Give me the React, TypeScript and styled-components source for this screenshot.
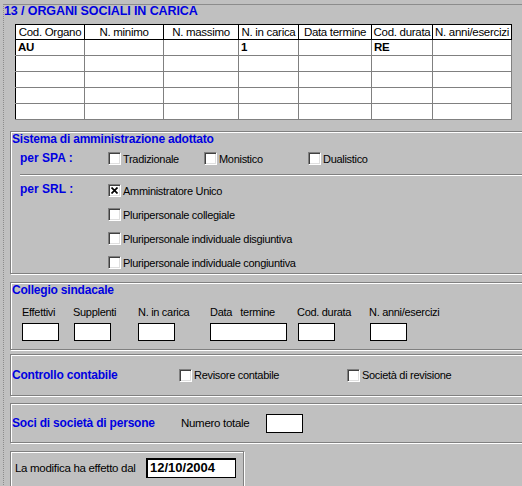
import React from 'react';
import styled, { createGlobalStyle } from 'styled-components';

const GlobalStyle = createGlobalStyle`
  html, body {
    margin: 0;
    padding: 0;
    background: #c0c0c0;
  }
  body {
    font-family: 'Liberation Sans', Arial, sans-serif;
    font-size: 11px;
    color: #000;
  }
`;

const BLUE = '#0000e0';

const Screen = styled.div`
  width: 522px;
  height: 486px;
  overflow: hidden;
  background: #c0c0c0;
  padding-left: 3px;
  box-sizing: border-box;
`;

const Frame = styled.div`
  margin-top: 4px;
  border-top: 1px solid #8c8c8c;
  border-left: 1px dotted #8c8c8c;
  height: 520px;
`;

const FrameTitle = styled.div`
  display: inline-block;
  margin-top: -1px;
  padding-right: 2px;
  background: #c0c0c0;
  color: ${BLUE};
  font-weight: bold;
  font-size: 12.5px;
  line-height: 13px;
  letter-spacing: -0.1px;
`;

const Grid = styled.table`
  margin: 6px 0 0 11px;
  border-collapse: collapse;
  table-layout: fixed;
  background: #fff;
  border: 1px solid #000;
  letter-spacing: -0.3px;
`;

const HeadCell = styled.th<{ $w: number }>`
  width: ${(p) => p.$w}px;
  height: 14px;
  padding: 0;
  font-weight: normal;
  font-size: 11.5px;
  text-align: center;
  white-space: nowrap;
  overflow: hidden;
  border-right: 1px solid #000;
  border-bottom: 1px solid #000;
  line-height: 14px;
`;

const Cell = styled.td`
  height: 15px;
  padding: 0 0 0 2px;
  font-weight: bold;
  font-size: 11.5px;
  border-right: 1px solid #808080;
  border-bottom: 1px solid #808080;
  line-height: 15px;
`;

const Group = styled.div<{ $h: number; $gap: number; $w?: number }>`
  margin: ${(p) => p.$gap}px 0 0 6px;
  width: ${(p) => p.$w ?? 530}px;
  height: ${(p) => p.$h}px;
  box-sizing: border-box;
  border: 1px solid #808080;
  box-shadow: inset 1px 1px 0 #fff, 1px 1px 0 #fff;
`;

const GroupTitle = styled.div<{ $w?: number }>`
  color: ${BLUE};
  font-weight: bold;
  font-size: 12px;
  letter-spacing: -0.2px;
  line-height: 14px;
  padding-left: 1px;
  white-space: nowrap;
  flex: none;
  width: ${(p) => (p.$w ? `${p.$w}px` : 'auto')};
  box-sizing: border-box;
`;

const AdminRow = styled.div<{ $top: number }>`
  display: grid;
  grid-template-columns: 88px 1fr;
  margin: ${(p) => p.$top}px 0 0 9px;
`;

const SideLabel = styled.div<{ $lift?: number }>`
  color: ${BLUE};
  font-weight: bold;
  font-size: 12px;
  line-height: 13px;
  margin-top: ${(p) => -(p.$lift ?? 0)}px;
`;

const OptionLine = styled.div`
  display: flex;
`;

const OptionStack = styled.div`
  display: flex;
  flex-direction: column;
  gap: 11px;
`;

const Separator = styled.div`
  margin: 9px 0 0 9px;
  height: 0;
  border-top: 1px solid #808080;
  border-bottom: 1px solid #fff;
`;

const Option = styled.label<{ $w?: number }>`
  display: flex;
  align-items: center;
  gap: 2px;
  height: 13px;
  flex: none;
  width: ${(p) => (p.$w ? `${p.$w}px` : 'auto')};
  white-space: nowrap;
  letter-spacing: -0.3px;
`;

const Box = styled.span`
  display: inline-flex;
  align-items: center;
  justify-content: center;
  width: 13px;
  height: 13px;
  box-sizing: border-box;
  background: #fff;
  border: 1px solid;
  border-color: #808080 #fff #fff #808080;
  box-shadow: inset 1px 1px 0 #404040, inset -1px -1px 0 #dfdfdf;
  flex: none;
`;

const Check = ({ on }: { on?: boolean }) => (
  <Box>
    {on && (
      <svg width="7" height="7" viewBox="0 0 7 7">
        <path d="M0.5 0.5 L6.5 6.5 M6.5 0.5 L0.5 6.5" stroke="#000" strokeWidth="1.7" />
      </svg>
    )}
  </Box>
);

const FieldRow = styled.div`
  display: flex;
  margin: 9px 0 0 11px;
`;

const Field = styled.div<{ $w: number }>`
  display: flex;
  flex-direction: column;
  width: ${(p) => p.$w}px;
  gap: 4px;
`;

const FieldLabel = styled.div`
  line-height: 13px;
  white-space: pre;
  letter-spacing: -0.3px;
`;

const Input = styled.div<{ $w: number; $h?: number; $shift?: number }>`
  width: ${(p) => p.$w}px;
  height: ${(p) => p.$h ?? 18}px;
  box-sizing: border-box;
  margin-left: ${(p) => p.$shift ?? 0}px;
  background: #fff;
  border: 1px solid #000;
  flex: none;
`;

const InlineRow = styled.div<{ $top?: number }>`
  display: flex;
  align-items: center;
  height: 100%;
`;

const DateRow = styled.div`
  display: flex;
  align-items: center;
  padding: 6px 0 0 4px;
`;

const PlainText = styled.span<{ $w?: number }>`
  letter-spacing: -0.3px;
  font-size: 11.5px;
  white-space: nowrap;
  flex: none;
  width: ${(p) => (p.$w ? `${p.$w}px` : 'auto')};
`;

const DateBox = styled.div`
  width: 90px;
  height: 20px;
  box-sizing: border-box;
  background: #fff;
  border: 1px solid #000;
  border-top-width: 2px;
  border-left-width: 2px;
  padding-left: 2px;
  font-weight: bold;
  font-size: 13px;
  line-height: 16px;
`;

const columns = [
  { label: 'Cod. Organo', w: 68 },
  { label: 'N. minimo', w: 78 },
  { label: 'N. massimo', w: 74 },
  { label: 'N. in carica', w: 59 },
  { label: 'Data termine', w: 72 },
  { label: 'Cod. durata', w: 60 },
  { label: 'N. anni/esercizi', w: 78 },
];

const rows = [
  ['AU', '', '', '1', '', 'RE', ''],
  ['', '', '', '', '', '', ''],
  ['', '', '', '', '', '', ''],
  ['', '', '', '', '', '', ''],
  ['', '', '', '', '', '', ''],
];

const srlOptions = [
  { label: 'Amministratore Unico', on: true },
  { label: 'Pluripersonale collegiale' },
  { label: 'Pluripersonale individuale disgiuntiva' },
  { label: 'Pluripersonale individuale congiuntiva' },
];

const collegio = [
  { label: 'Effettivi', w: 51, input: 37, shift: 0 },
  { label: 'Supplenti', w: 65, input: 37, shift: 1 },
  { label: 'N. in carica', w: 72, input: 37, shift: 0 },
  { label: 'Data   termine', w: 87, input: 77, shift: 0 },
  { label: 'Cod. durata', w: 72, input: 37, shift: 1 },
  { label: 'N. anni/esercizi', w: 100, input: 37, shift: 1 },
];

const App = () => {
  return (
    <Screen>
      <GlobalStyle />
      <Frame>
        <FrameTitle>13 / ORGANI SOCIALI IN CARICA</FrameTitle>
        <Grid>
          <thead>
            <tr>
              {columns.map((c) => (
                <HeadCell key={c.label} $w={c.w}>
                  {c.label}
                </HeadCell>
              ))}
            </tr>
          </thead>
          <tbody>
            {rows.map((r, i) => (
              <tr key={i}>
                {r.map((v, j) => (
                  <Cell key={j}>{v}</Cell>
                ))}
              </tr>
            ))}
          </tbody>
        </Grid>

        <Group $gap={11} $h={143}>
          <GroupTitle>Sistema di amministrazione adottato</GroupTitle>
          <AdminRow $top={6}>
            <SideLabel>per SPA :</SideLabel>
            <OptionLine>
              <Option $w={96}>
                <Check />
                Tradizionale
              </Option>
              <Option $w={104}>
                <Check />
                Monistico
              </Option>
              <Option>
                <Check />
                Dualistico
              </Option>
            </OptionLine>
          </AdminRow>
          <Separator />
          <AdminRow $top={8}>
            <SideLabel $lift={1}>per SRL :</SideLabel>
            <OptionStack>
              {srlOptions.map((o) => (
                <Option key={o.label}>
                  <Check on={o.on} />
                  {o.label}
                </Option>
              ))}
            </OptionStack>
          </AdminRow>
        </Group>

        <Group $gap={8} $h={68}>
          <GroupTitle>Collegio sindacale</GroupTitle>
          <FieldRow>
            {collegio.map((f) => (
              <Field key={f.label} $w={f.w}>
                <FieldLabel>{f.label}</FieldLabel>
                <Input $w={f.input} $shift={f.shift} />
              </Field>
            ))}
          </FieldRow>
        </Group>

        <Group $gap={4} $h={42}>
          <InlineRow>
            <GroupTitle $w={168}>Controllo contabile</GroupTitle>
            <Option $w={168}>
              <Check />
              Revisore contabile
            </Option>
            <Option>
              <Check />
              Società di revisione
            </Option>
          </InlineRow>
        </Group>

        <Group $gap={7} $h={40}>
          <InlineRow>
            <GroupTitle $w={170}>Soci di società di persone</GroupTitle>
            <PlainText $w={85}>Numero totale</PlainText>
            <Input $w={37} $h={19} />
          </InlineRow>
        </Group>

        <Group $gap={8} $h={40} $w={234}>
          <DateRow>
            <PlainText $w={131}>La modifica ha effetto dal</PlainText>
            <DateBox>12/10/2004</DateBox>
          </DateRow>
        </Group>
      </Frame>
    </Screen>
  );
};

export default App;
